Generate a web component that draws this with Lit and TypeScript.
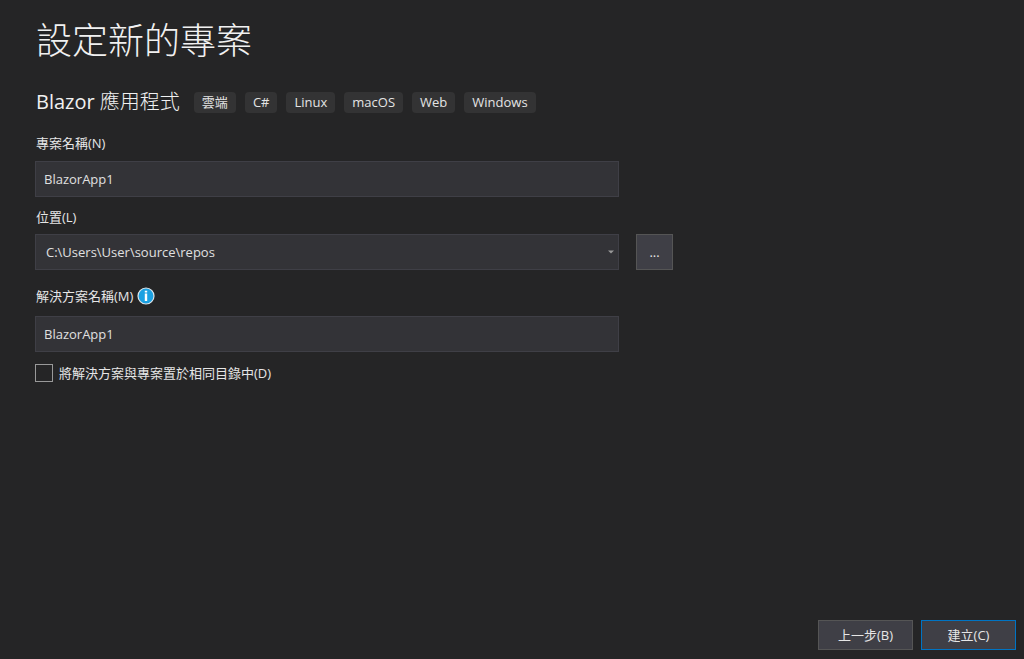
import { LitElement, html, css } from "lit";
import { customElement, property, state } from "lit/decorators.js";

@customElement("tag-list")
export class TagList extends LitElement {
  @property({ attribute: false }) tags: string[] = [];

  static styles = css`
    :host {
      display: block;
    }
    .tags {
      display: flex;
      flex-wrap: wrap;
      gap: 9px;
      margin: 0;
      padding: 0;
      list-style: none;
    }
    .tag {
      padding: 0 8px;
      border-radius: 4px;
      background: #333334;
      color: #e4e4e4;
      font-size: 13px;
      line-height: 21px;
    }
  `;

  render() {
    return html`<ul class="tags">
      ${this.tags.map((tag) => html`<li class="tag">${tag}</li>`)}
    </ul>`;
  }
}

@customElement("app-root")
export class AppRoot extends LitElement {
  @state() private projectName = "BlazorApp1";
  @state() private solutionName = "BlazorApp1";

  private tags = ["雲端", "C#", "Linux", "macOS", "Web", "Windows"];

  static styles = css`
    :host {
      display: flex;
      flex-direction: column;
      box-sizing: border-box;
      min-height: 100vh;
      background: #252526;
      color: #e6e6e6;
      font-family: "Open Sans", "Noto Sans CJK TC", sans-serif;
      font-size: 13px;
      line-height: 20px;
    }
    .content {
      flex: 1;
      padding: 17px 35px;
    }
    .title {
      margin: 0;
      padding-left: 1px;
      color: #f1f1f1;
      font-size: 36px;
      font-weight: 300;
      line-height: 48px;
    }
    .template {
      display: flex;
      align-items: center;
      gap: 14px;
      margin-top: 21px;
      padding-left: 1px;
    }
    .template-name {
      margin: 0;
      color: #f1f1f1;
      font-size: 20px;
      font-weight: 400;
      line-height: 32px;
    }
    .template-kind {
      font-weight: 300;
    }
    .fields {
      display: grid;
      grid-template-columns: minmax(0, 584px) 37px;
      column-gap: 17px;
      margin-top: 15px;
    }
    .label-row {
      grid-column: 1 / -1;
      display: flex;
      align-items: center;
      gap: 4px;
      min-height: 20px;
      padding-left: 1px;
      padding-bottom: 8px;
    }
    .label-row + * {
      grid-column: 1;
    }
    .location {
      padding-top: 10px;
      padding-bottom: 7px;
    }
    .solution {
      padding-top: 16px;
      padding-bottom: 10px;
    }
    .box,
    .combo {
      box-sizing: border-box;
      width: 100%;
      height: 36px;
      margin: 0;
      padding: 0 8px;
      border: 1px solid #3f3f46;
      border-radius: 0;
      background: #333337;
      color: #e0e0e0;
      font: inherit;
      outline: none;
      appearance: none;
    }
    .combo {
      padding: 0 24px 0 10px;
    }
    .box:focus,
    .combo:focus {
      border-color: #007acc;
    }
    .combo-wrap {
      display: grid;
      align-items: center;
    }
    .combo-wrap > * {
      grid-area: 1 / 1;
    }
    .arrow {
      justify-self: end;
      margin-right: 5px;
      pointer-events: none;
    }
    .button {
      box-sizing: border-box;
      min-width: 95px;
      height: 30px;
      padding: 0 8px;
      border: 1px solid #555555;
      border-radius: 0;
      background: #3f3f46;
      color: #e6e6e6;
      font: inherit;
    }
    .browse {
      min-width: 0;
      height: 36px;
    }
    .primary {
      border-color: #0074c4;
    }
    .button:hover {
      background: #4b4b53;
    }
    .check {
      display: inline-flex;
      align-items: center;
      gap: 6px;
      margin-top: 11px;
    }
    .check-box {
      box-sizing: border-box;
      width: 18px;
      height: 18px;
      margin: 0;
      border: 1px solid #999999;
      background: #252526;
      appearance: none;
    }
    .check-box:checked {
      background: #007acc;
      box-shadow: inset 0 0 0 3px #252526;
    }
    .info {
      display: block;
    }
    .actions {
      display: flex;
      justify-content: flex-end;
      gap: 8px;
      padding: 0 8px 9px;
    }
  `;

  render() {
    return html`
      <main class="content">
        <h1 class="title">設定新的專案</h1>
        <div class="template">
          <h2 class="template-name">Blazor <span class="template-kind">應用程式</span></h2>
          <tag-list .tags=${this.tags}></tag-list>
        </div>
        <div class="fields">
          <div class="label-row"><label for="project">專案名稱(N)</label></div>
          <input
            class="box"
            id="project"
            type="text"
            .value=${this.projectName}
            @input=${(e: Event) => (this.projectName = (e.target as HTMLInputElement).value)}
          />
          <div class="label-row location"><label for="location">位置(L)</label></div>
          <div class="combo-wrap">
            <select class="combo" id="location">
              <option>C:\\Users\\User\\source\\repos</option>
            </select>
            <svg class="arrow" width="6" height="4" viewBox="0 0 6 4" aria-hidden="true">
              <path d="M0 0.5H6L3 3.5Z" fill="#999999" />
            </svg>
          </div>
          <button class="button browse" type="button">...</button>
          <div class="label-row solution">
            <label for="solution">解決方案名稱(M)</label>
            <svg class="info" width="18" height="18" viewBox="0 0 18 18" aria-hidden="true">
              <circle cx="9" cy="9" r="8" fill="#1ba1e2" stroke="#e0e6ea" stroke-width="1.2" />
              <path d="M7.8 3.8h2.4v1.8H7.8zM7.8 6.4h2.4V14H7.8z" fill="#ffffff" />
            </svg>
          </div>
          <input
            class="box"
            id="solution"
            type="text"
            .value=${this.solutionName}
            @input=${(e: Event) => (this.solutionName = (e.target as HTMLInputElement).value)}
          />
        </div>
        <label class="check">
          <input class="check-box" type="checkbox" />
          <span>將解決方案與專案置於相同目錄中(D)</span>
        </label>
      </main>
      <footer class="actions">
        <button class="button" type="button">上一步(B)</button>
        <button class="button primary" type="button">建立(C)</button>
      </footer>
    `;
  }
}
